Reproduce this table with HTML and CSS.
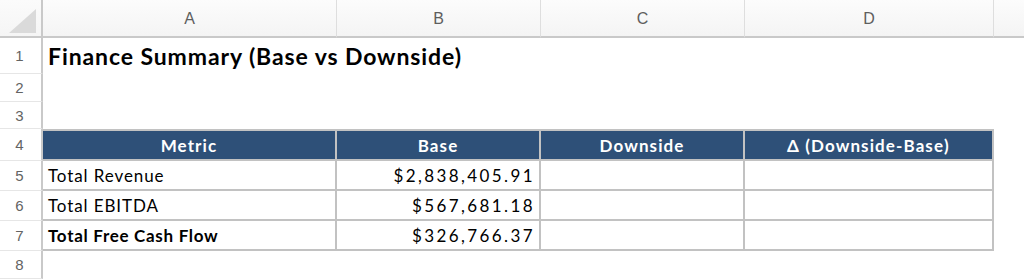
FILE: index.html
```html
<!DOCTYPE html>
<html lang="en">
<head>
<meta charset="utf-8">
<title>Finance Summary</title>
<link rel="stylesheet" href="styles.css">
</head>
<body>
<div class="sheet">
  <div class="corner">
    <svg class="corner-tri" width="30" height="26" viewBox="0 0 30 26"><polygon points="2,25 29,25 29,1" fill="#dadada"/></svg>
  </div>
  <div class="colhead">A</div>
  <div class="colhead">B</div>
  <div class="colhead">C</div>
  <div class="colhead">D</div>
  <div class="colhead colhead-last"></div>

  <div class="rowhead">1</div>
  <div class="cell title">Finance Summary (Base vs Downside)</div>
  <div class="cell"></div><div class="cell"></div><div class="cell"></div><div class="cell"></div>

  <div class="rowhead">2</div>
  <div class="cell"></div><div class="cell"></div><div class="cell"></div><div class="cell"></div><div class="cell"></div>

  <div class="rowhead">3</div>
  <div class="cell"></div><div class="cell"></div><div class="cell"></div><div class="cell"></div><div class="cell"></div>

  <div class="rowhead">4</div>
  <div class="th">Metric</div>
  <div class="th">Base</div>
  <div class="th">Downside</div>
  <div class="th">Δ (Downside-Base)</div>
  <div class="cell"></div>

  <div class="rowhead">5</div>
  <div class="td">Total Revenue</div>
  <div class="td num">$2,838,405.91</div>
  <div class="td"></div>
  <div class="td"></div>
  <div class="cell"></div>

  <div class="rowhead">6</div>
  <div class="td">Total EBITDA</div>
  <div class="td num">$567,681.18</div>
  <div class="td"></div>
  <div class="td"></div>
  <div class="cell"></div>

  <div class="rowhead">7</div>
  <div class="td bold">Total Free Cash Flow</div>
  <div class="td num">$326,766.37</div>
  <div class="td"></div>
  <div class="td"></div>
  <div class="cell"></div>

  <div class="rowhead">8</div>
  <div class="cell"></div><div class="cell"></div><div class="cell"></div><div class="cell"></div><div class="cell"></div>
</div>
</body>
</html>
```

FILE: styles.css
```css
html, body {
  margin: 0;
  padding: 0;
  background: #ffffff;
}

.sheet {
  display: grid;
  grid-template-columns: 43px 294px 204px 204px 249px 1fr;
  grid-template-rows: 38px 36px 28px 27px 32px 30px 30px 30px 1fr;
  width: 1024px;
  height: 279px;
  overflow: hidden;
  font-family: Lato, "Liberation Sans", sans-serif;
  color: #000;
}

.sheet > div {
  box-sizing: border-box;
  min-width: 0;
}

.corner {
  background: linear-gradient(#fbfbfb, #f5f5f5);
  border-right: 2px solid #c9c9c9;
  border-bottom: 2px solid #c9c9c9;
  display: flex;
  align-items: flex-end;
  justify-content: flex-end;
  padding: 0 4px 2px 0;
}

.corner-tri {
  display: block;
}

.colhead {
  background: linear-gradient(#fcfcfc, #f4f4f4);
  border-bottom: 2px solid #c9c9c9;
  border-right: 1px solid #dedede;
  display: flex;
  align-items: center;
  justify-content: center;
  font-family: "Liberation Sans", Arial, sans-serif;
  font-size: 16px;
  color: #5e5e5e;
  padding-top: 1px;
}

.colhead-last {
  border-right: none;
}

.rowhead {
  border-right: 2px solid #c9c9c9;
  border-bottom: 1px solid #e6e6e6;
  display: flex;
  align-items: center;
  justify-content: center;
  font-family: "Liberation Sans", Arial, sans-serif;
  font-size: 15px;
  color: #636363;
  padding-right: 2px;
}

.cell {
  display: flex;
  align-items: flex-end;
  padding: 0 5px;
  white-space: nowrap;
}

.title {
  overflow: visible;
  font-size: 23px;
  font-weight: 700;
  letter-spacing: 0.9px;
  padding-bottom: 4px;
  position: relative;
  z-index: 1;
}

.th {
  background: #2e5078;
  color: #ffffff;
  font-weight: 700;
  font-size: 17px;
  letter-spacing: 1.1px;
  border-top: 2px solid #c2c2c2;
  border-bottom: 2px solid #c2c2c2;
  border-right: 2px solid #c2c2c2;
  display: flex;
  align-items: center;
  justify-content: center;
  white-space: nowrap;
}

.td {
  font-size: 17px;
  letter-spacing: 0.9px;
  border-bottom: 2px solid #c2c2c2;
  border-right: 2px solid #c2c2c2;
  display: flex;
  align-items: center;
  padding: 1px 5px 0 5px;
  white-space: nowrap;
}

.num {
  justify-content: flex-end;
  letter-spacing: 2.4px;
  padding-right: 4px;
}

.bold {
  font-weight: 700;
  letter-spacing: 0.7px;
}
```
